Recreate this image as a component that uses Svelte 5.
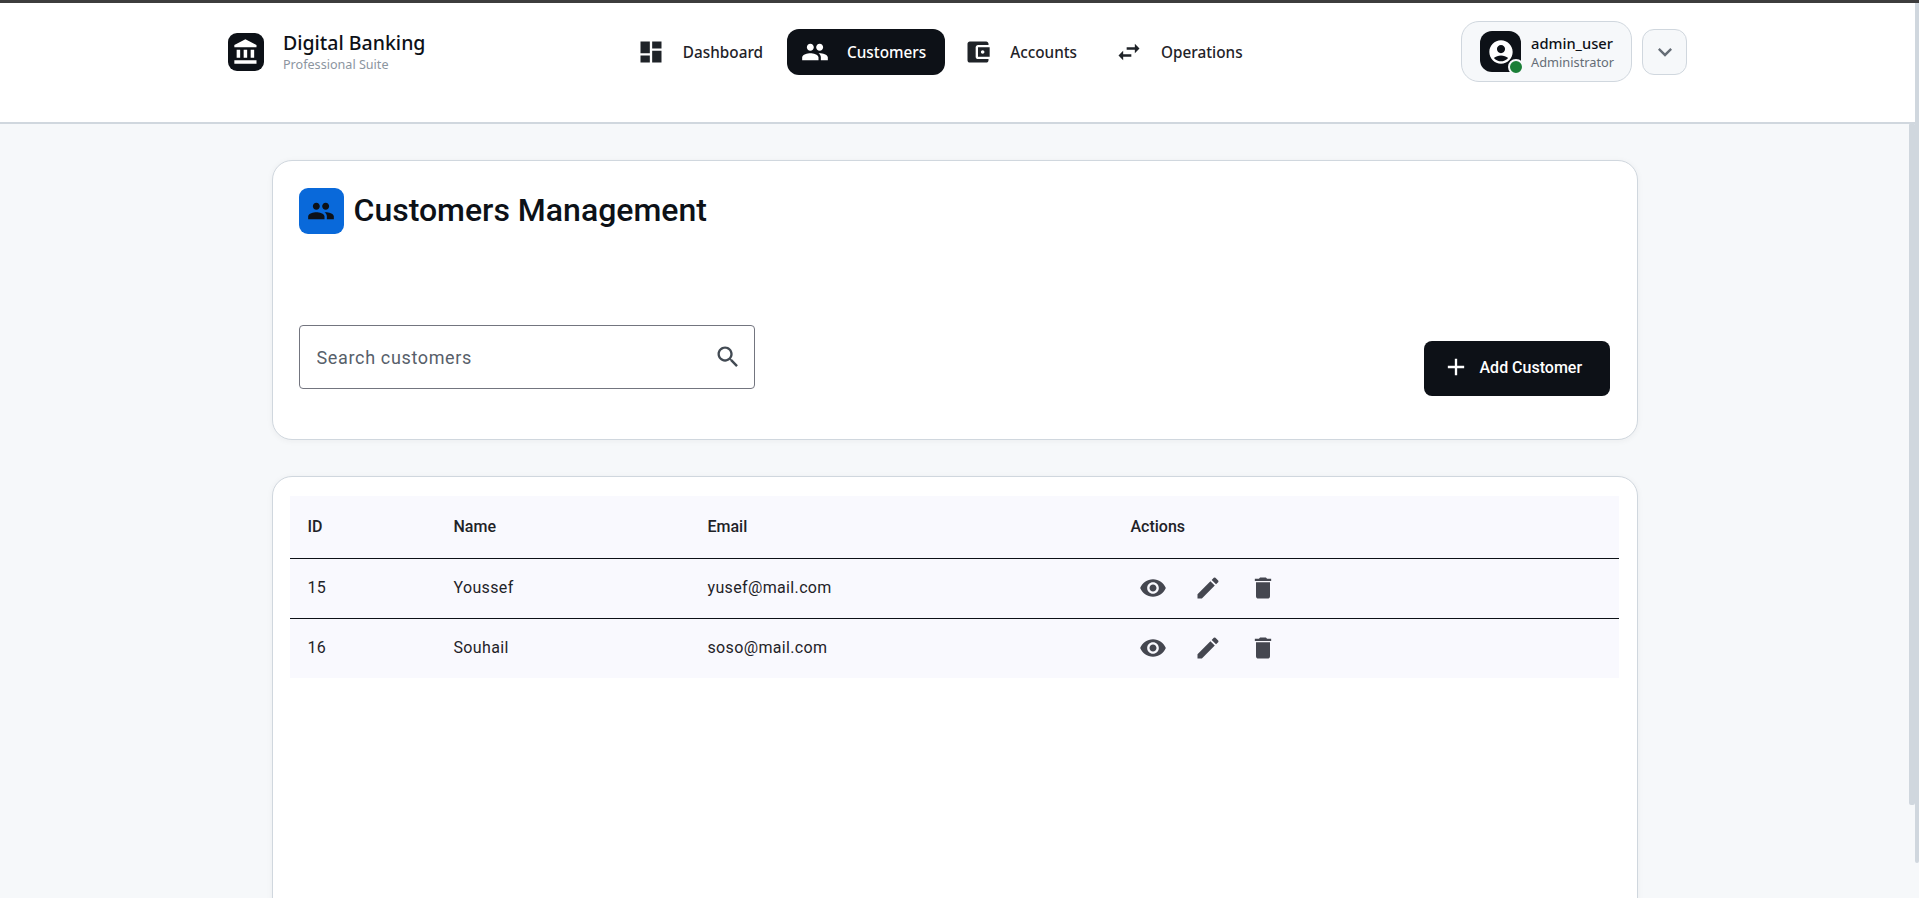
<script>
  const icons = {
    bank: 'M4 10v7h3v-7H4zm6 0v7h3v-7h-3zM2 22h19v-3H2v3zm14-12v7h3v-7h-3zm-4.5-9L2 6v2h19V6l-9.5-5z',
    dashboard: 'M3 13h8V3H3v10zm0 8h8v-6H3v6zm10 0h8V11h-8v10zm0-18v6h8V3h-8z',
    people:
      'M16 11c1.66 0 2.99-1.34 2.99-3S17.66 5 16 5c-1.66 0-3 1.34-3 3s1.34 3 3 3zm-8 0c1.66 0 2.99-1.34 2.99-3S9.66 5 8 5C6.34 5 5 6.34 5 8s1.34 3 3 3zm0 2c-2.33 0-7 1.17-7 3.5V19h14v-2.5c0-2.33-4.67-3.5-7-3.5zm8 0c-.29 0-.62.02-.97.05 1.16.84 1.97 1.97 1.97 3.45V19h6v-2.5c0-2.33-4.67-3.5-7-3.5z',
    wallet:
      'M21 18v1c0 1.1-.9 2-2 2H5c-1.11 0-2-.9-2-2V5c0-1.1.89-2 2-2h14c1.1 0 2 .9 2 2v1h-9c-1.11 0-2 .9-2 2v8c0 1.1.89 2 2 2h9zm-9-2h10V8H12v8zm4-2.5c-.83 0-1.5-.67-1.5-1.5s.67-1.5 1.5-1.5 1.5.67 1.5 1.5-.67 1.5-1.5 1.5z',
    swap: 'M6.99 11L3 15l4 4v-3h7v-2H7v-3zM21 9l-4-4v3h-7v2h7v3z',
    account:
      'M12 2C6.48 2 2 6.48 2 12s4.48 10 10 10 10-4.48 10-10S17.52 2 12 2zm0 4c1.93 0 3.5 1.57 3.5 3.5S13.93 13 12 13s-3.5-1.57-3.5-3.5S10.07 6 12 6zm0 14c-2.03 0-4.43-.82-6.14-2.88C7.55 15.8 9.68 15 12 15s4.45.8 6.14 2.12C16.43 19.18 14.03 20 12 20z',
    search:
      'M15.5 14h-.79l-.28-.27C15.41 12.59 16 11.11 16 9.5 16 5.91 13.09 3 9.5 3S3 5.91 3 9.5 5.91 16 9.5 16c1.61 0 3.09-.59 4.23-1.57l.27.28v.79l5 4.99L20.49 19l-4.99-5zm-6 0C7.01 14 5 11.99 5 9.5S7.01 5 9.5 5 14 7.01 14 9.5 11.99 14 9.5 14z',
    add: 'M19 13h-6v6h-2v-6H5v-2h6V5h2v6h6v2z',
    eye: 'M12 4.5C7 4.5 2.73 7.61 1 12c1.73 4.39 6 7.5 11 7.5s9.27-3.11 11-7.5c-1.73-4.39-6-7.5-11-7.5zM12 17c-2.76 0-5-2.24-5-5s2.24-5 5-5 5 2.24 5 5-2.24 5-5 5zm0-8c-1.66 0-3 1.34-3 3s1.34 3 3 3 3-1.34 3-3-1.34-3-3-3z',
    edit: 'M3 17.25V21h3.75L17.81 9.94l-3.75-3.75L3 17.25zM20.71 7.04c.39-.39.39-1.02 0-1.41l-2.34-2.34a.9959.9959 0 0 0-1.41 0l-1.83 1.83 3.75 3.75 1.83-1.83z',
    trash: 'M6 19c0 1.1.9 2 2 2h8c1.1 0 2-.9 2-2V7H6v12zM19 4h-3.5l-1-1h-5l-1 1H5v2h14V4z',
    chevron: 'M7.41 8.59L12 13.17l4.59-4.58L18 10l-6 6-6-6z'
  };

  const navItems = [
    { label: 'Dashboard', icon: 'dashboard' },
    { label: 'Customers', icon: 'people', active: true },
    { label: 'Accounts', icon: 'wallet' },
    { label: 'Operations', icon: 'swap' }
  ];

  const customers = [
    { id: 15, name: 'Youssef', email: 'yusef@mail.com' },
    { id: 16, name: 'Souhail', email: 'soso@mail.com' }
  ];
</script>

{#snippet icon(name, size = 28)}
  <svg class="icon" width={size} height={size} viewBox="0 0 24 24" fill="currentColor" aria-hidden="true">
    <path d={icons[name]} />
  </svg>
{/snippet}

<div class="topline"></div>
<div class="thumb thumb-page"></div>
<div class="thumb thumb-main"></div>

<div class="shell">
  <header class="header">
    <div class="header-inner">
      <div class="brand">
        <div class="brand-logo">{@render icon('bank')}</div>
        <div class="brand-text">
          <span class="brand-name">Digital Banking</span>
          <span class="brand-sub">Professional Suite</span>
        </div>
      </div>

      <nav class="nav">
        {#each navItems as item (item.label)}
          <a class="nav-item" class:active={item.active} href="#{item.label.toLowerCase()}">
            {@render icon(item.icon)}
            <span>{item.label}</span>
          </a>
        {/each}
      </nav>

      <div class="user">
        <div class="user-card">
          <div class="avatar">
            {@render icon('account')}
            <span class="status"></span>
          </div>
          <div class="user-text">
            <span class="user-name">admin_user</span>
            <span class="user-role">Administrator</span>
          </div>
        </div>
        <button type="button" class="menu-btn" aria-label="Open user menu">
          {@render icon('chevron')}
        </button>
      </div>
    </div>
  </header>

  <main class="main">
    <section class="card toolbar">
      <div class="title-row">
        <div class="title-icon">{@render icon('people')}</div>
        <h1>Customers Management</h1>
      </div>
      <div class="controls">
        <label class="search">
          <input type="text" placeholder="Search customers" />
          {@render icon('search')}
        </label>
        <button type="button" class="add-btn">
          {@render icon('add')}
          <span>Add Customer</span>
        </button>
      </div>
    </section>

    <section class="card table-card">
      <table>
        <thead>
          <tr>
            <th class="col-id">ID</th>
            <th class="col-name">Name</th>
            <th class="col-email">Email</th>
            <th>Actions</th>
          </tr>
        </thead>
        <tbody>
          {#each customers as customer (customer.id)}
            <tr>
              <td>{customer.id}</td>
              <td>{customer.name}</td>
              <td>{customer.email}</td>
              <td class="actions">
                <div class="action-row">
                  <button type="button" aria-label="View">{@render icon('eye')}</button>
                  <button type="button" aria-label="Edit">{@render icon('edit')}</button>
                  <button type="button" aria-label="Delete">{@render icon('trash')}</button>
                </div>
              </td>
            </tr>
          {/each}
        </tbody>
      </table>
    </section>
  </main>
</div>

<style>
  :global(body) {
    background: #f6f8fa;
    overflow: hidden;
  }

  .topline {
    background: #3d3d3d;
    height: 3px;
    left: 0;
    position: fixed;
    right: 0;
    top: 0;
    z-index: 10;
  }

  /* the two scrollbars of the page, drawn over it */
  .thumb {
    background: #d0d7de;
    border-radius: 0 0 2px 2px;
    position: fixed;
    z-index: 5;
  }

  .thumb-page {
    height: 863px;
    right: 0;
    top: 0;
    width: 4px;
  }

  .thumb-main {
    border-radius: 2px;
    height: 682px;
    right: 4px;
    top: 123px;
    width: 6px;
  }

  .shell {
    color: #0d1117;
    font-family: Roboto, sans-serif;
    height: 100vh;
    overflow: hidden;
    width: 1915px;
  }

  .icon {
    display: block;
    flex: none;
  }

  .header {
    background: #fff;
    border-bottom: 2px solid #d0d7de;
    font-family: 'Noto Sans', sans-serif;
    height: 122px;
  }

  .header-inner {
    align-items: center;
    display: flex;
    justify-content: space-between;
    margin: 0 auto;
    padding-top: 21px;
    width: 1459px;
  }

  .brand {
    align-items: center;
    display: flex;
    gap: 19px;
  }

  .brand-logo {
    align-items: center;
    background: #0d1117;
    border-radius: 9px;
    color: #fff;
    display: flex;
    height: 38px;
    justify-content: center;
    width: 36px;
  }

  .brand-text {
    display: flex;
    flex-direction: column;
    margin-top: -1px;
  }

  .brand-name {
    font-size: 19.5px;
    font-weight: 500;
    line-height: 27px;
  }

  .brand-sub {
    color: #8c959f;
    font-size: 12.6px;
    line-height: 18px;
  }

  .nav {
    display: flex;
    gap: 5px;
    margin-left: -2px;
  }

  .nav-item {
    align-items: center;
    border-radius: 12px;
    color: #1f2328;
    display: flex;
    font-size: 15.3px;
    font-weight: 500;
    gap: 18px;
    height: 46px;
    padding: 0 19px 0 14px;
    text-decoration: none;
  }

  .nav-item span {
    padding-top: 1px;
  }

  .nav-item.active {
    background: #0d1117;
    color: #fff;
  }

  .user {
    align-items: center;
    display: flex;
    gap: 10px;
  }

  .user-card {
    align-items: center;
    background: #f6f8fa;
    border: 1px solid #d0d7de;
    border-radius: 18px;
    box-sizing: border-box;
    display: flex;
    gap: 10px;
    height: 61px;
    padding-left: 18px;
    width: 171px;
  }

  .avatar {
    align-items: center;
    background: #0d1117;
    border-radius: 12px;
    color: #fff;
    display: flex;
    height: 41px;
    justify-content: center;
    position: relative;
    width: 41px;
  }

  .status {
    background: #1a7f37;
    border: 2px solid #f6f8fa;
    border-radius: 50%;
    bottom: -3px;
    height: 12px;
    position: absolute;
    right: -3px;
    width: 12px;
  }

  .user-text {
    display: flex;
    flex-direction: column;
    padding-top: 2px;
  }

  .user-name {
    font-size: 14.7px;
    font-weight: 500;
    line-height: 19px;
  }

  .user-role {
    color: #656d76;
    font-size: 12.8px;
    line-height: 18px;
  }

  .menu-btn {
    align-items: center;
    background: #f6f8fa;
    border: 1px solid #d0d7de;
    border-radius: 12px;
    color: #656d76;
    display: flex;
    height: 46px;
    justify-content: center;
    padding: 0;
    width: 45px;
  }

  .main {
    background: #f6f8fa;
    width: 1909px;
  }

  .card {
    background: #fff;
    border: 1px solid #d0d7de;
    border-radius: 20px;
    box-shadow: 0 1px 6px rgba(31, 35, 40, 0.05);
    box-sizing: border-box;
    margin: 0 auto;
    width: 1366px;
  }

  .toolbar {
    height: 280px;
    padding: 27px 27px 0 26px;
    position: relative;
    top: 36px;
  }

  .title-row {
    align-items: flex-start;
    display: flex;
    gap: 10px;
  }

  .title-icon {
    align-items: center;
    background: #0969da;
    border-radius: 9px;
    display: flex;
    height: 46px;
    justify-content: center;
    width: 45px;
  }

  h1 {
    font-size: 32px;
    font-weight: 500;
    line-height: 44px;
    margin: 0 0 6px;
  }

  .controls {
    align-items: flex-start;
    display: flex;
    justify-content: space-between;
    margin-top: 87px;
  }

  .search {
    align-items: center;
    border: 1px solid #73757f;
    border-radius: 4px;
    box-sizing: border-box;
    color: #424a53;
    display: flex;
    height: 64px;
    padding: 0 12px 0 17px;
    width: 456px;
  }

  .search input {
    background: none;
    border: 0;
    color: inherit;
    flex: 1;
    font: 400 18px Roboto, sans-serif;
    letter-spacing: 0.65px;
    outline: none;
    padding: 0;
  }

  .search input::placeholder {
    color: #57606a;
    opacity: 1;
  }

  .add-btn {
    align-items: center;
    background: #0d1117;
    border: 0;
    border-radius: 8px;
    color: #fff;
    display: flex;
    font: 500 16px Roboto, sans-serif;
    gap: 10px;
    height: 55px;
    margin-top: 16px;
    padding: 0 24px 3px 18px;
    width: 186px;
  }

  .table-card {
    height: 574px;
    margin-top: 72px;
    padding: 19px 18px 0 17px;
  }

  table {
    background: #f9f9fe;
    border-collapse: separate;
    border-spacing: 0;
    font-size: 16px;
    table-layout: fixed;
    width: 100%;
  }

  .col-id {
    width: 146px;
  }

  .col-name {
    width: 254px;
  }

  .col-email {
    width: 423px;
  }

  th,
  td {
    border-bottom: 1px solid #0d1117;
    box-sizing: border-box;
    color: #1f2328;
    padding: 0 18px 2px;
    text-align: left;
  }

  th {
    font-weight: 500;
    height: 63px;
  }

  td {
    height: 60px;
    letter-spacing: 0.35px;
  }

  tbody tr:last-child td {
    border-bottom: 0;
    height: 59px;
  }

  .action-row {
    display: flex;
    gap: 11px;
  }

  .action-row button {
    background: none;
    border: 0;
    color: #454750;
    padding: 8px;
  }
</style>
